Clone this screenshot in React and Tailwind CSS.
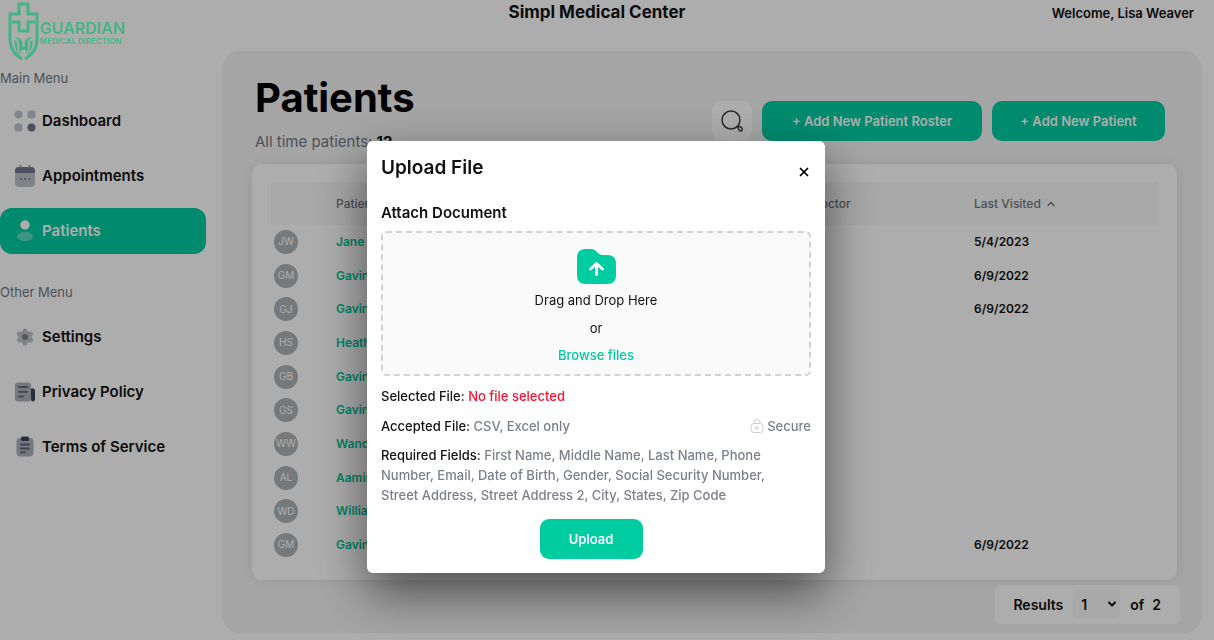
import { useState } from "react";
import { ChevronDown, ChevronUp, X } from "lucide-react";

const PATIENTS = [
  { initials: "JW", name: "Jane Watson", visited: "5/4/2023" },
  { initials: "GM", name: "Gavin Miller", visited: "6/9/2022" },
  { initials: "GJ", name: "Gavin Jones", visited: "6/9/2022" },
  { initials: "HS", name: "Heather Smith", visited: "" },
  { initials: "GB", name: "Gavin Brown", visited: "" },
  { initials: "GS", name: "Gavin Scott", visited: "" },
  { initials: "WW", name: "Wanda White", visited: "" },
  { initials: "AL", name: "Aamir Lee", visited: "" },
  { initials: "WD", name: "William Davis", visited: "" },
  { initials: "GM", name: "Gavin Moore", visited: "6/9/2022" },
];

export default function App() {
  const [open, setOpen] = useState(true);

  return (
    <div className="min-h-screen bg-white pb-[7px] font-['Inter',sans-serif] text-[#111]">
      <header className="grid h-[51px] grid-cols-[1fr_auto_1fr] items-start pr-5">
        <Logo />
        <div className="text-[17px] leading-6 font-bold">Simpl Medical Center</div>
        <div className="text-right text-[13px] leading-[26px] font-semibold">Welcome, Lisa Weaver</div>
      </header>

      <div className="flex">
        <Sidebar />
        <main className="mr-3 min-w-0 flex-1 rounded-[18px] bg-[#f3f3f3] pt-[27px] pr-[25px] pb-[9px] pl-[30px]">
          <div className="flex items-start justify-between pr-3 pl-[3px]">
            <div>
              <h1 className="text-[40px] leading-10 font-bold text-black">Patients</h1>
              <p className="mt-[14px] text-[15px] leading-5 text-[#727783]">
                All time patients: <b className="font-bold text-[#111]">12</b>
              </p>
            </div>
            <div className="mt-[23px] flex gap-[10px]">
              <button aria-label="Search" className="flex size-10 items-center justify-center rounded-[10px] bg-white">
                <SearchIcon />
              </button>
              <button className="h-10 w-[220px] rounded-[10px] bg-[#00cca2] pt-0.5 text-[13px] font-semibold text-white" onClick={() => setOpen(true)}>
                + Add New Patient Roster
              </button>
              <button className="h-10 w-[173px] rounded-[10px] bg-[#00cca2] pt-0.5 text-[13px] font-semibold text-white">
                + Add New Patient
              </button>
            </div>
          </div>

          <div className="mt-3 rounded-[10px] bg-white px-[19px] py-[18px] shadow-[0_0_12px_rgba(0,0,0,0.08)]">
            <PatientTable />
          </div>

          <div className="mt-[5px] -mr-[3px] flex justify-end">
            <div className="flex h-[39px] items-center rounded-md bg-white pr-[19px] pl-[18px] text-sm font-semibold">
              <label htmlFor="page">Results</label>
              <div className="relative ml-[10px]">
                <select id="page" className="h-[29px] w-[47px] appearance-none rounded-md bg-[#f9f9f9] pl-2" defaultValue="1">
                  <option>1</option>
                  <option>2</option>
                </select>
                <ChevronDown className="pointer-events-none absolute top-2 right-0.5 size-3" strokeWidth={4} />
              </div>
              <span className="ml-[10px]">of</span>
              <span className="ml-2">2</span>
            </div>
          </div>
        </main>
      </div>

      {open && <UploadModal onClose={() => setOpen(false)} />}
    </div>
  );
}

function Sidebar() {
  return (
    <nav className="w-[222px] shrink-0 pt-[17px]">
      <div className="text-[13px] leading-5 text-[#727783]">Main Menu</div>
      <div className="mt-[10px] flex flex-col gap-[9px]">
        <NavItem label="Dashboard" icon={<DashboardIcon />} />
        <NavItem label="Appointments" icon={<CalendarIcon />} />
        <NavItem label="Patients" icon={<UserIcon />} active />
      </div>
      <div className="mt-7 text-[13px] leading-5 text-[#727783]">Other Menu</div>
      <div className="mt-3 flex flex-col gap-[9px]">
        <NavItem label="Settings" icon={<GearIcon />} />
        <NavItem label="Privacy Policy" icon={<PolicyIcon />} />
        <NavItem label="Terms of Service" icon={<ClipboardIcon />} />
      </div>
    </nav>
  );
}

function NavItem({ label, icon, active }) {
  const base = "mr-4 flex h-[46px] items-center gap-[6px] rounded-xl pl-[14px] text-[15px] font-semibold";
  return (
    <a href="#" className={active ? `${base} bg-[#00cca2] text-white` : base}>
      {icon}
      {label}
    </a>
  );
}

function PatientTable() {
  return (
    <table className="h-[380px] w-full table-fixed text-left text-xs">
      <colgroup>
        <col className="w-[65px]" />
        <col />
        <col />
        <col className="w-[162px]" />
        <col className="w-[184px]" />
      </colgroup>
      <thead>
        <tr className="h-[43px] bg-[#f8f8f8] text-[#727783]">
          <th aria-label="Initials"></th>
          <th className="font-medium">Patient Name</th>
          <th className="font-medium">Phone</th>
          <th className="font-medium">Doctor</th>
          <th className="font-medium">
            <span className="flex items-center gap-1">
              Last Visited <ChevronUp className="size-3" strokeWidth={3} />
            </span>
          </th>
        </tr>
      </thead>
      <tbody>
        {PATIENTS.map((p, i) => (
          <tr key={i}>
            <td className="pl-[3px]">
              <span className="flex size-6 items-center justify-center rounded-full bg-[#adb3b6] text-[10px] text-white">{p.initials}</span>
            </td>
            <td className="font-semibold text-[#00c398]">{p.name}</td>
            <td></td>
            <td></td>
            <td className="font-semibold">{p.visited}</td>
          </tr>
        ))}
      </tbody>
    </table>
  );
}

function UploadModal({ onClose }) {
  return (
    <div className="fixed inset-0 z-40 flex items-start justify-center overflow-auto bg-black/32 pt-[141px] pr-[22px]">
      <div
        role="dialog"
        aria-label="Upload File"
        className="w-[458px] rounded-md bg-white px-[14px] pt-[15px] pb-[14px] text-[13px] shadow-[0_20px_50px_rgba(0,0,0,0.55)]"
      >
        <div className="flex items-center justify-between">
          <h2 className="text-[19px] leading-6 font-semibold">Upload File</h2>
          <button aria-label="Close" className="mt-2 text-black" onClick={onClose}>
            <X className="size-[14px]" strokeWidth={3} />
          </button>
        </div>
        <h3 className="mt-[21px] text-[15px] leading-6 font-semibold">Attach Document</h3>

        <div className="mt-[6px] flex h-[145px] flex-col items-center rounded-[5px] border-2 border-dashed border-[#d8cfd1] bg-[#fafafa] pt-4">
          <FolderIcon />
          <span className="mt-[6px] leading-5">Drag and Drop Here</span>
          <span className="mt-2 leading-5">or</span>
          <label htmlFor="file" className="mt-[7px] cursor-pointer leading-5 font-medium text-[#00cca2]">
            Browse files
          </label>
          <input id="file" type="file" accept=".csv,.xls,.xlsx" className="sr-only" />
        </div>

        <p className="mt-[10px] leading-5 font-medium">
          Selected File: <span className="text-[#ff0f2f]">No file selected</span>
        </p>
        <div className="mt-[10px] flex justify-between leading-5 font-medium">
          <p>
            Accepted File: <span className="text-[#7b7f89]">CSV, Excel only</span>
          </p>
          <span className="flex items-center gap-[3px] text-[#7b7f89]">
            <LockIcon /> Secure
          </span>
        </div>
        <p className="mt-[9px] mr-6 leading-5 font-medium">
          Required Fields:{" "}
          <span className="text-[#7b7f89]">
            First Name, Middle Name, Last Name, Phone Number, Email, Date of Birth, Gender, Social Security Number, Street Address, Street
            Address 2, City, States, Zip Code
          </span>
        </p>
        <div className="mt-[14px] flex justify-center pr-[10px]">
          <button className="h-10 w-[103px] rounded-[9px] bg-[#00cca2] pt-0.5 text-[13px] font-semibold text-white">Upload</button>
        </div>
      </div>
    </div>
  );
}

/* the logo stays above the modal backdrop */
function Logo() {
  return (
    <a href="#" className="relative z-50 flex items-start pt-0.5 pl-2 text-[#45b389]">
      <svg width="31" height="59" viewBox="0 0 31 59" fill="none" stroke="currentColor">
        <path d="M14.200 57C7 53 2 46 2 37V12h9V2h9v10h9v25c0 9-5 16-12.200 20" strokeWidth="3" />
        <path d="M4 20h7v9h9v-9h7" strokeWidth="3" />
        <g fill="currentColor" stroke="none">
          <path d="M6.500 35.500c5-.5 8 2 8 6V45h2v-3.500c0-4 3-6.500 8-6-2.500 1-4.500 3-4.500 6v6.500L18 52v-4h-5v4l-2-4v-6.500c0-3-2-5-4.500-6z" />
          <path d="M6.500 38c2 1 3 2.500 3 5v5.500L12.500 54c-4-3.500-6.500-9-6-16zM24.500 38c-2 1-3 2.500-3 5v5.500L18.500 54c4-3.500 6.500-9 6-16z" />
        </g>
      </svg>
      <span className="flex flex-col pt-[17px] pl-px">
        <span className="text-base leading-[18px] font-semibold">GUARDIAN</span>
        <span className="text-[8px] leading-none font-semibold">MEDICAL DIRECTION</span>
      </span>
    </a>
  );
}

function DashboardIcon() {
  return (
    <svg className="size-[22px]" viewBox="0 0 22 22" fill="#c3c5cb">
      <circle cx="4.500" cy="4.500" r="4" />
      <rect x="13.500" y="0.500" width="8" height="8" rx="3" />
      <rect x="0.500" y="13.500" width="8" height="8" rx="3" />
      <circle cx="17.500" cy="17.500" r="4" fill="#72768a" />
    </svg>
  );
}

function CalendarIcon() {
  return (
    <svg className="size-[22px]" viewBox="0 0 22 22">
      <rect x="1" y="2" width="20" height="20" rx="4" fill="#bfc1c9" />
      <path d="M1 8V6a4 4 0 0 1 4-4h12a4 4 0 0 1 4 4v2z" fill="#72768a" />
      <path d="M6.500 0v3M15.500 0v3" stroke="#8e919f" strokeWidth="1.500" />
      <path d="M6 14h1.500M10.300 14h1.500M14.600 14h1.500" stroke="#72768a" strokeWidth="1.800" />
    </svg>
  );
}

function UserIcon() {
  return (
    <svg className="size-[22px]" viewBox="0 0 22 22" fill="#fff">
      <circle cx="11" cy="5" r="4.700" />
      <ellipse cx="11" cy="16.500" rx="8" ry="4.700" opacity="0.35" />
    </svg>
  );
}

function GearIcon() {
  return (
    <svg className="size-[22px]" viewBox="0 0 22 22">
      <g stroke="#bfc1c9" strokeWidth="5" strokeLinecap="round">
        <path d="M11 5v12M5.500 8l11 6M5.500 14l11-6" />
      </g>
      <circle cx="11" cy="11" r="6.500" fill="#bfc1c9" />
      <circle cx="11" cy="11" r="3" fill="#7d808e" />
    </svg>
  );
}

function PolicyIcon() {
  return (
    <svg className="size-[22px]" viewBox="0 0 22 22">
      <rect x="1" y="1.500" width="16" height="19" rx="3" fill="#aeb1bb" />
      <path d="M17 7.500h2a2 2 0 0 1 2 2v9a2 2 0 0 1-4 0z" fill="#3e4459" />
      <path d="M5 6h8M5 10.800h8M5 15.500h4" stroke="#5f6477" strokeWidth="1.800" strokeLinecap="round" />
    </svg>
  );
}

function ClipboardIcon() {
  return (
    <svg className="size-[22px]" viewBox="0 0 22 22">
      <rect x="2.500" y="2" width="17" height="18.500" rx="4" fill="#aeb1bb" />
      <rect x="7" y="0.500" width="8" height="4.500" rx="1.500" fill="#3e4459" />
      <path d="M7 8.500h8M7 12.500h8M7 16.300h4" stroke="#5f6477" strokeWidth="1.800" strokeLinecap="round" />
    </svg>
  );
}

function SearchIcon() {
  return (
    <svg className="size-[22px]" viewBox="0 0 22 22" fill="none" stroke="#3b3b3b" strokeWidth="1.500">
      <circle cx="10" cy="10" r="9" />
      <path d="M16.800 16.500c1.400-.8 4.300.8 4.400 2.800.1 1.700-2.200 2.400-3.100 1-.6-1-.7-2.200-1.300-3.800z" />
    </svg>
  );
}

function FolderIcon() {
  return (
    <svg className="h-[35px] w-[39px] shrink-0" viewBox="0 0 39 35">
      <path
        d="M0 9C0 3 3 0 9 0h4c4 0 5.500 1.500 7.500 3.500S24 6 27 6h3c6 0 9 3 9 9v11c0 6-3 9-9 9H9c-6 0-9-3-9-9z"
        fill="#00cca2"
      />
      <path d="M19.500 25.500V15.500M13.500 20l6-5.500 6 5.500" stroke="#fff" strokeWidth="2.800" fill="none" strokeLinecap="round" strokeLinejoin="round" />
    </svg>
  );
}

function LockIcon() {
  return (
    <svg className="size-[14px]" viewBox="0 0 14 14" fill="none" stroke="#cfcfd2">
      <rect x="1" y="4.500" width="12" height="9" rx="3" />
      <path d="M4 4.500V3.500a3 3 0 0 1 6 0v1" />
      <circle cx="7" cy="9" r="1.300" />
    </svg>
  );
}
